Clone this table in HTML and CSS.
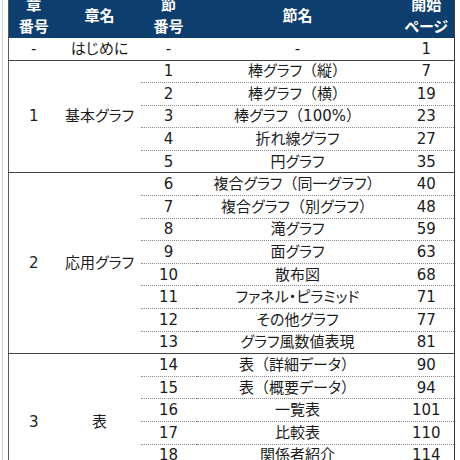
FILE: index.html
```html
<html>
    <head>
        <link rel="stylesheet" href="styles.css">
    </head>
    <body>
        <div class="sheet">
            <table class="toc">
                <colgroup>
                    <col class="c-chap"><col class="c-name"><col class="c-sec"><col class="c-title"><col class="c-page">
                </colgroup>
                <thead>
                    <tr><th>章<br>番号</th><th>章名</th><th>節<br>番号</th><th>節名</th><th>開始<br>ページ</th></tr>
                </thead>
                <tbody>
                    <tr class="intro end"><td>-</td><td>はじめに</td><td>-</td><td>-</td><td>1</td></tr>

                    <tr><td class="grp" rowspan="5">1</td><td class="grp" rowspan="5">基本グラフ</td><td>1</td><td>棒グラフ<span class="fw">（</span>縦<span class="fw">）</span></td><td>7</td></tr>
                    <tr><td>2</td><td>棒グラフ<span class="fw">（</span>横<span class="fw">）</span></td><td>19</td></tr>
                    <tr><td>3</td><td>棒グラフ<span class="fw">（</span>100%<span class="fw">）</span></td><td>23</td></tr>
                    <tr><td>4</td><td>折れ線グラフ</td><td>27</td></tr>
                    <tr class="end"><td>5</td><td>円グラフ</td><td>35</td></tr>

                    <tr><td class="grp" rowspan="8">2</td><td class="grp" rowspan="8">応用グラフ</td><td>6</td><td>複合グラフ<span class="fw">（</span>同一グラフ<span class="fw">）</span></td><td>40</td></tr>
                    <tr><td>7</td><td>複合グラフ<span class="fw">（</span>別グラフ<span class="fw">）</span></td><td>48</td></tr>
                    <tr><td>8</td><td>滝グラフ</td><td>59</td></tr>
                    <tr><td>9</td><td>面グラフ</td><td>63</td></tr>
                    <tr><td>10</td><td>散布図</td><td>68</td></tr>
                    <tr><td>11</td><td>ファネル・ピラミッド</td><td>71</td></tr>
                    <tr><td>12</td><td>その他グラフ</td><td>77</td></tr>
                    <tr class="end"><td>13</td><td>グラフ風数値表現</td><td>81</td></tr>

                    <tr><td class="grp" rowspan="6">3</td><td class="grp" rowspan="6">表</td><td>14</td><td>表<span class="fw">（</span>詳細データ<span class="fw">）</span></td><td>90</td></tr>
                    <tr><td>15</td><td>表<span class="fw">（</span>概要データ<span class="fw">）</span></td><td>94</td></tr>
                    <tr><td>16</td><td>一覧表</td><td>101</td></tr>
                    <tr><td>17</td><td>比較表</td><td>110</td></tr>
                    <tr><td>18</td><td>関係者紹介</td><td>114</td></tr>
                    <tr class="end"><td>19</td><td>組織図</td><td>120</td></tr>
                </tbody>
            </table>
        </div>
    </body>
</html>
```

FILE: styles.css
```css
body {
    margin: 0;
    background: #fff;
    overflow: hidden;
}

.sheet {
    margin-left: 2px;
    padding-left: 5px;
    border-left: 1px solid #cfcfcf;
    min-height: 460px;
}

.toc {
    margin-top: -8px;
    width: 447px;
    table-layout: fixed;
    border-collapse: collapse;
    border-left: 1px solid #5a5a5a;
    border-right: 1px solid #3a3a3a;
    font-family: "DejaVu Sans", "Noto Sans CJK JP", sans-serif;
    font-size: 15px;
    font-feature-settings: "palt";
    color: #1c1c1c;
}

.c-chap { width: 50px; }
.c-name { width: 82px; }
.c-sec { width: 56px; }
.c-title { width: 202px; }
.c-page { width: 56px; }

.toc th {
    background: #0d3e6d;
    color: #fff;
    font-family: "Noto Sans CJK JP", sans-serif;
    font-weight: bold;
    font-size: 15px;
    line-height: 22px;
    padding: 1px 0;
    text-align: center;
}

.toc td {
    height: 22.6px;
    padding: 0;
    line-height: 20px;
    text-align: center;
    white-space: nowrap;
    border-bottom: 1px dotted #8a8a8a;
}

.toc .intro td {
    height: 22px;
}

.toc tr.end td,
.toc td.grp {
    border-bottom: 1px solid #454545;
}

/* full-width brackets keep their side bearings */
.toc .fw {
    font-feature-settings: normal;
}
```
